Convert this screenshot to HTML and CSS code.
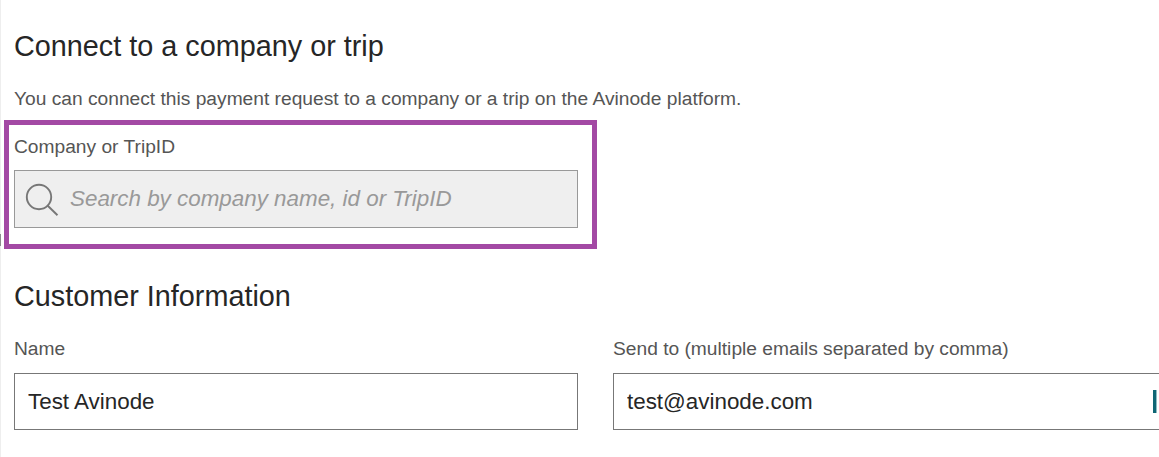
FILE: index.html
```html
<!DOCTYPE html>
<html lang="en">
<head>
  <meta charset="UTF-8">
  <meta name="viewport" content="width=device-width, initial-scale=1.0">
  <title>Payment request</title>
  <link rel="stylesheet" href="styles.css">
</head>
<body>
  <main class="page">
    <section class="connect">
      <h2>Connect to a company or trip</h2>
      <p class="intro">You can connect this payment request to a company or a trip on the Avinode platform.</p>
      <div class="highlight">
        <label class="label" for="company">Company or TripID</label>
        <div class="search">
          <svg class="search-icon" viewBox="0 0 34 34" fill="none" stroke="#777" stroke-width="1.9">
            <circle cx="14" cy="14" r="12.2"/>
            <path d="M22.5 22.5L32.5 32.3"/>
          </svg>
          <input type="text" id="company" placeholder="Search by company name, id or TripID">
        </div>
      </div>
    </section>
    <section class="customer">
      <h2>Customer Information</h2>
      <div class="fields">
        <div class="field">
          <label class="label" for="name">Name</label>
          <div class="box"><input type="text" id="name" value="Test Avinode"></div>
        </div>
        <div class="field">
          <label class="label" for="email">Send to (multiple emails separated by comma)</label>
          <div class="box">
            <input type="text" id="email" value="test@avinode.com">
            <span class="marker"></span>
          </div>
        </div>
      </div>
    </section>
    <span class="edge-thumb"></span>
  </main>
</body>
</html>
```

FILE: styles.css
```css
* {
  box-sizing: border-box;
}

body {
  margin: 0;
  background-color: #fff;
  font-family: "Liberation Sans", Arial, sans-serif;
  overflow: hidden;
}

.page {
  position: relative;
  height: 457px;
  padding: 30px 0 0 13px;
  border-left: 1px solid #eee;
}

h2 {
  margin: 0;
  font-size: 28.8px;
  font-weight: normal;
  line-height: 32px;
  color: #262626;
}

.intro,
.label {
  display: block;
  margin: 0;
  font-size: 19.2px;
  line-height: 22px;
  color: #555;
}

.intro {
  margin-top: 26px;
}

.highlight {
  width: 593px;
  height: 129px;
  margin: 10px 0 0 -10px;
  padding: 11px 14px 0 5px;
  border: 5px solid #a349a4;
}

.search {
  display: flex;
  align-items: center;
  height: 58px;
  margin-top: 12px;
  padding-left: 10px;
  border: 1px solid #999;
  background-color: #efefef;
}

.search-icon {
  flex: none;
  width: 34px;
  height: 34px;
  margin-top: 2px;
}

input {
  flex: 1;
  min-width: 0;
  padding: 0;
  border: none;
  outline: none;
  background: none;
  font-family: inherit;
  font-size: 22.4px;
  color: #262626;
}

.search input {
  margin-left: 11px;
  font-style: italic;
}

.search input::placeholder {
  color: #999;
}

.customer {
  margin-top: 31px;
}

.fields {
  display: flex;
  gap: 35px;
  margin-top: 26px;
}

.field {
  flex: none;
  width: 564px;
}

.box {
  display: flex;
  align-items: center;
  height: 57px;
  margin-top: 13px;
  padding: 0 19px 0 13px;
  border: 1px solid #777;
}

.marker {
  width: 4px;
  height: 23px;
  border-right: 1px solid #8fbcc4;
  background-color: #0f6674;
}

.edge-thumb {
  position: absolute;
  left: -1px;
  top: 234px;
  width: 1px;
  height: 12px;
  background-color: #8c8c8c;
}
```
